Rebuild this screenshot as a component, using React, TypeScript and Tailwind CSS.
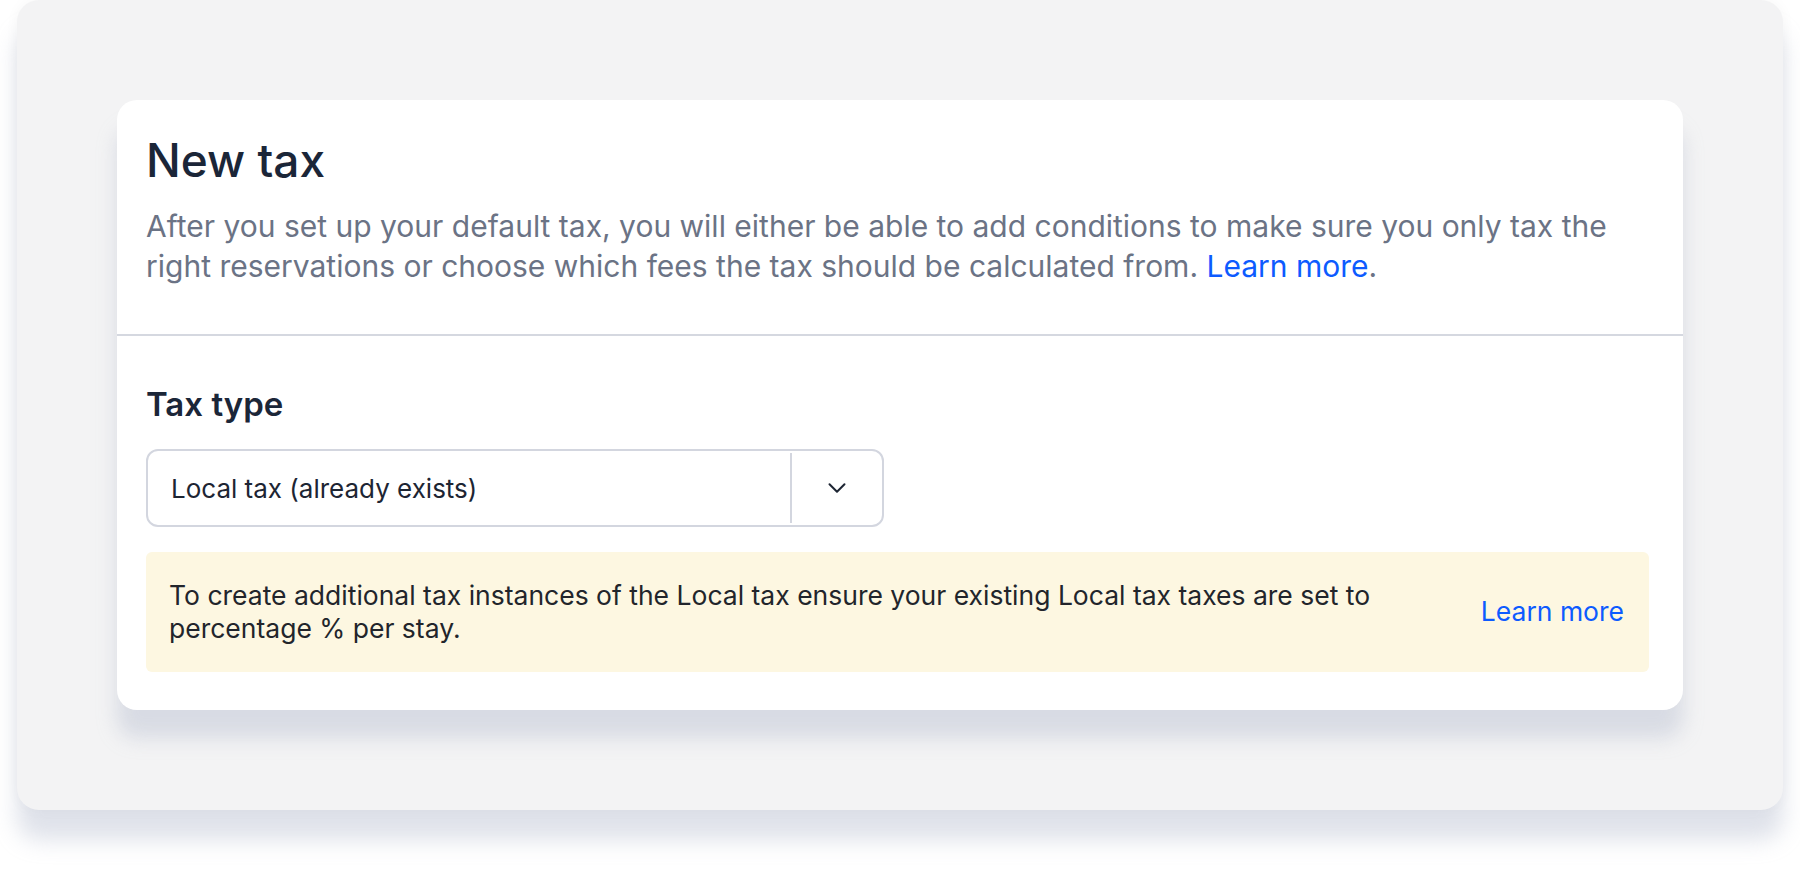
import { ChevronDown } from 'lucide-react'

export default function App() {
  return (
    <div className="min-h-screen w-full bg-white px-[17px] font-['Inter',sans-serif]">
      <div className="h-[810px] rounded-[22px] bg-[#f3f3f4] px-[100px] pt-[100px] shadow-[0_30px_22px_rgba(170,178,200,0.38),0_0_14px_rgba(0,0,0,0.04)]">
        <div className="rounded-[20px] bg-white shadow-[0_28px_20px_rgba(170,178,200,0.36)]">
          <div className="px-[29px] pt-[32px] pb-[48px]">
            <h1 className="text-[46px] font-medium leading-[56px] text-[#1b2638]">New tax</h1>
            <p className="mt-[18px] text-[30px] leading-[40px] text-[#6b7385]">
              After you set up your default tax, you will either be able to add conditions to make sure you only tax the
              <br />
              right reservations or choose which fees the tax should be calculated from.{' '}
              <a href="#" className="text-[#0d5bff]">
                Learn more
              </a>
              .
            </p>
          </div>

          <div className="h-[2px] bg-[#d5d8e0]" />

          <div className="pl-[29px] pr-[34px] pt-[48px] pb-[38px]">
            <h2 className="text-[33px] font-semibold leading-[40px] text-[#1b2638]">Tax type</h2>

            <div className="mt-[25px] flex h-[78px] w-[738px] items-stretch rounded-[12px] border-2 border-[#d3d6df] bg-white">
              <div className="flex flex-1 items-center pl-[23px] text-[26px] text-[#1d2533]">
                Local tax (already exists)
              </div>
              <div className="my-[2px] w-[2px] bg-[#d3d6df]" />
              <div className="flex w-[90px] items-center justify-center text-[#1d2533]">
                <ChevronDown size={30} strokeWidth={1.6} />
              </div>
            </div>

            <div className="mt-[25px] flex items-center justify-between rounded-[6px] bg-[#fdf7e1] py-[27px] pl-[23px] pr-[25px]">
              <p className="text-[26.5px] leading-[33px] text-[#22252b]">
                To create additional tax instances of the Local tax ensure your existing Local tax taxes are set to
                <br />
                percentage % per stay.
              </p>
              <a href="#" className="text-[26.5px] text-[#0d5bff]">
                Learn more
              </a>
            </div>
          </div>
        </div>
      </div>
    </div>
  )
}
